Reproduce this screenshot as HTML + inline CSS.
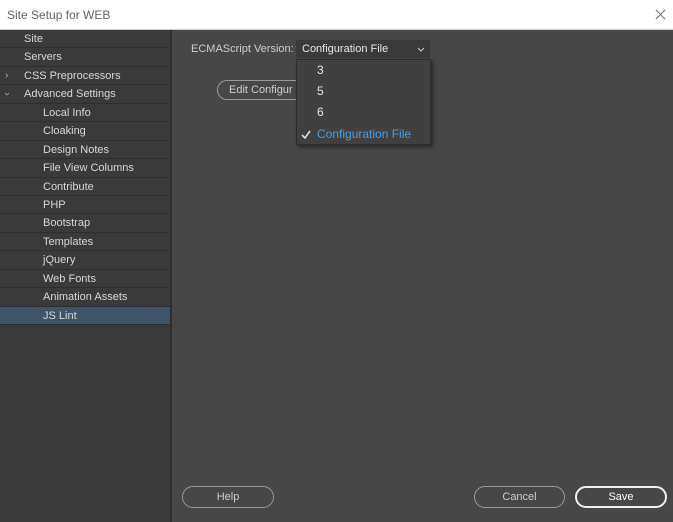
<!DOCTYPE html>
<html><head><style>
*{margin:0;padding:0;box-sizing:border-box}
body{width:673px;height:522px;background:#474747;font-family:"Liberation Sans",Arial,sans-serif;font-size:11px;color:#d8d8d8;position:relative;overflow:hidden}
.title{position:absolute;left:0;top:0;width:673px;height:30px;background:#fff;color:#666;font-size:12px;line-height:30px;padding-left:7px;border-bottom:1px solid #ccc}
.x{position:absolute;right:6px;top:8px;width:13px;height:13px}
.side{position:absolute;left:0;top:30px;width:172px;height:492px;background:#3a3a3a;border-right:2px solid #2f2f2f}
.row{height:18.45px;line-height:18px;border-bottom:1px solid #2e2e2e;padding-left:24px;white-space:nowrap;position:relative}
.row.s{padding-left:43px}
.row.sel{background:#3f5468}
.arr{position:absolute;left:5px;top:0;color:#bbb;font-size:10px}
.lbl{position:absolute;left:191px;top:43px;color:#cfcfcf}
.sel1{position:absolute;left:296px;top:40px;width:134px;height:18px;background:#3a3a3a;color:#e8e8e8;line-height:18px;padding-left:6px}
.btn{position:absolute;border:1px solid #9a9a9a;border-radius:11px;text-align:center;color:#cfcfcf;height:22px;line-height:21px}
.menu{position:absolute;left:296px;top:59px;width:135px;height:86px;background:#404040;box-shadow:2px 2px 4px rgba(0,0,0,.5);border:1px solid #2d2d2d}
.mi{position:absolute;left:20px;font-size:12px;color:#e6e6e6}
</style></head><body>
<div class="title">Site Setup for WEB
<svg class="x" viewBox="0 0 14 14"><path d="M2 2L12 12M12 2L2 12" stroke="#777" stroke-width="1.1"/></svg></div>
<div class="side">
<div class="row">Site</div>
<div class="row">Servers</div>
<div class="row"><span class="arr">›</span>CSS Preprocessors</div>
<div class="row"><span class="arr" style="transform:rotate(90deg);left:5px">›</span>Advanced Settings</div>
<div class="row s">Local Info</div>
<div class="row s">Cloaking</div>
<div class="row s">Design Notes</div>
<div class="row s">File View Columns</div>
<div class="row s">Contribute</div>
<div class="row s">PHP</div>
<div class="row s">Bootstrap</div>
<div class="row s">Templates</div>
<div class="row s">jQuery</div>
<div class="row s">Web Fonts</div>
<div class="row s">Animation Assets</div>
<div class="row s sel">JS Lint</div>
</div>
<div class="lbl">ECMAScript Version:</div>
<div class="sel1">Configuration File<svg style="position:absolute;right:5px;top:7px" width="8" height="5" viewBox="0 0 8 5"><path d="M1 1L4 4L7 1" stroke="#ccc" fill="none"/></svg></div>
<div class="btn" style="left:217px;top:80px;width:100px;height:20px;line-height:19px;text-align:left;padding-left:11px">Edit Configur</div>
<div class="menu">
<div class="mi" style="top:3px">3</div>
<div class="mi" style="top:24px">5</div>
<div class="mi" style="top:45px">6</div>
<svg style="position:absolute;left:4px;top:70px" width="10" height="9" viewBox="0 0 10 9"><path d="M1 5L4 8L9 1" stroke="#ddd" stroke-width="1.6" fill="none"/></svg>
<div class="mi" style="top:67px;color:#4a9ee8">Configuration File</div>
</div>
<div class="btn" style="left:182px;top:486px;width:92px">Help</div>
<div class="btn" style="left:474px;top:486px;width:91px">Cancel</div>
<div class="btn" style="left:575px;top:486px;width:92px;border:2px solid #f0f0f0;color:#fff;line-height:19px">Save</div>
</body></html>
